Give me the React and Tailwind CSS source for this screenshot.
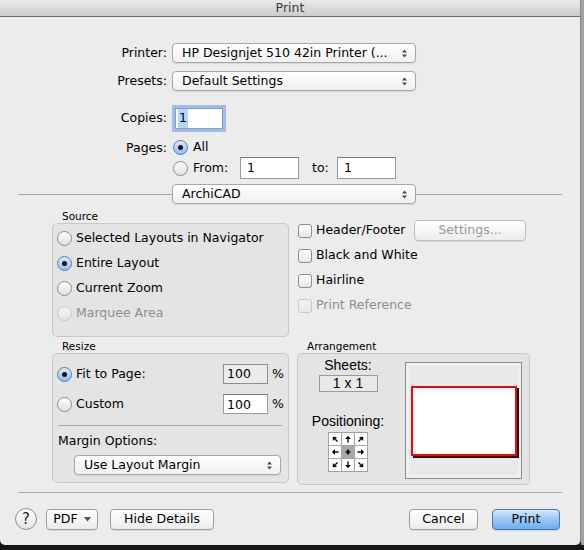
import React from "react";

// small up/down chevrons used by the pop-up buttons
function Arrows() {
  return (
    <svg width="5" height="9" viewBox="0 0 5 9" className="shrink-0">
      <path d="M0 3.5 L2.5 0.5 L5 3.5 Z" fill="#4a4a4a" />
      <path d="M0 5.5 L2.5 8.5 L5 5.5 Z" fill="#4a4a4a" />
    </svg>
  );
}

function PopUp({ value, className = "" }) {
  return (
    <div
      className={`flex h-[20px] shrink-0 items-center justify-between rounded-[4px] border border-[#a6a6a6] bg-gradient-to-b from-white to-[#f0f0f0] pl-[9px] pr-[8px] shadow-[0_1px_1px_rgba(0,0,0,0.08)] ${className}`}
    >
      <span className="truncate">{value}</span>
      <Arrows />
    </div>
  );
}

function Radio({ checked = false, disabled = false }) {
  const look = checked
    ? "border-[#5b7cab] bg-gradient-to-b from-[#dbeafb] to-[#8fbdef]"
    : disabled
    ? "border-[#c6c6c6] bg-gradient-to-b from-[#f3f3f3] to-[#e6e6e6]"
    : "border-[#8d8d8d] bg-gradient-to-b from-white to-[#e0e0e0]";
  return (
    <span
      className={`flex h-[15px] w-[15px] shrink-0 items-center justify-center rounded-full border ${look}`}
    >
      {checked && <span className="h-[5px] w-[5px] rounded-full bg-[#151515]" />}
    </span>
  );
}

function Checkbox({ disabled = false }) {
  return (
    <span
      className={`h-[14px] w-[14px] shrink-0 rounded-[3px] border bg-gradient-to-b ${
        disabled
          ? "border-[#c8c8c8] from-[#f3f3f3] to-[#e8e8e8]"
          : "border-[#8d8d8d] from-white to-[#e6e6e6]"
      }`}
    />
  );
}

function Arrow({ rot }) {
  return (
    <svg width="8" height="8" viewBox="0 0 8 8" className={rot}>
      <path d="M4 0.8 L7 4 H4.7 V7.6 H3.3 V4 H1 Z" fill="#111" />
    </svg>
  );
}

const btn =
  "flex h-[21px] items-center justify-center rounded-[4px] border border-[#9d9d9d] bg-gradient-to-b from-white to-[#ececec] shadow-[0_1px_0_rgba(0,0,0,0.08)]";

const box = "rounded-[5px] border border-[#c8c8c8] bg-[#e4e4e4]";

const small = "pl-[10px] text-[10.5px]";

export default function App() {
  const cells = [
    "-rotate-45",
    "rotate-0",
    "rotate-45",
    "-rotate-90",
    null,
    "rotate-90",
    "rotate-[-135deg]",
    "rotate-180",
    "rotate-[135deg]",
  ];

  return (
    <div className="flex h-[550px] w-[584px] flex-col overflow-hidden bg-[#161616] font-['DejaVu_Sans',sans-serif] text-[12.5px] text-black">
      <div className="flex h-[545px] shrink-0">
        {/* Window */}
        <div className="flex w-[581px] flex-col overflow-hidden rounded-b-[5px] border-r border-[#8a8a8a] bg-[#ececec]">
          {/* Title bar */}
          <div className="flex h-[17px] shrink-0 items-center justify-center border-b border-[#6e6e6e] bg-gradient-to-b from-[#ebebeb] to-[#cbcbcb] text-[#3a3a3a]">
            Print
          </div>

          {/* Printer / Presets */}
          <div className="mt-[26px] flex items-center">
            <div className="w-[167px] text-right">Printer:</div>
            <PopUp value="HP Designjet 510 42in Printer (..." className="ml-[5px] w-[244px]" />
          </div>
          <div className="mt-[8px] flex items-center">
            <div className="w-[167px] text-right">Presets:</div>
            <PopUp value="Default Settings" className="ml-[5px] w-[244px]" />
          </div>

          {/* Copies */}
          <div className="mt-[17px] flex items-center">
            <div className="w-[167px] text-right">Copies:</div>
            <div className="ml-[8px] flex h-[21px] w-[48px] items-center border border-[#7f9fc9] bg-white pl-[2px] shadow-[0_0_0_3px_rgba(110,160,230,0.6)]">
              <span className="bg-[#b5d5ff] px-[1px]">1</span>
            </div>
          </div>

          {/* Pages */}
          <div className="mt-[11px] flex items-start">
            <div className="h-[15px] w-[167px] text-right leading-[15px]">Pages:</div>
            <div className="ml-[6px] flex flex-col">
              <div className="flex h-[15px] items-center">
                <Radio checked />
                <span className="ml-[5px]">All</span>
              </div>
              <div className="mt-[2px] flex h-[22px] items-center">
                <Radio />
                <span className="ml-[5px] w-[47px]">From:</span>
                <div className="flex h-[22px] w-[59px] items-center border border-[#9a9a9a] border-t-[#7a7a7a] bg-white pl-[6px]">
                  1
                </div>
                <span className="ml-[13px] w-[25px]">to:</span>
                <div className="flex h-[22px] w-[59px] items-center border border-[#9a9a9a] border-t-[#7a7a7a] bg-white pl-[6px]">
                  1
                </div>
              </div>
            </div>
          </div>

          {/* ArchiCAD pane selector */}
          <div className="mt-[5px] flex items-center pl-[18px]">
            <div className="h-px w-[154px] bg-[#a5a5a5]" />
            <PopUp value="ArchiCAD" className="w-[244px]" />
            <div className="h-px w-[146px] bg-[#a5a5a5]" />
          </div>

          {/* Source + options */}
          <div className="mt-[4px] flex pl-[52px]">
            <div className="w-[237px]">
              <div className={`${small} h-[15px] pt-[2px] leading-[13px]`}>Source</div>
              <div className={`${box} h-[114px] pl-[4px] pt-[2px]`}>
                {[
                  ["Selected Layouts in Navigator", false, false],
                  ["Entire Layout", true, false],
                  ["Current Zoom", false, false],
                  ["Marquee Area", false, true],
                ].map(([label, checked, disabled]) => (
                  <div key={label} className="flex h-[25px] items-center">
                    <Radio checked={checked} disabled={disabled} />
                    <span className={`ml-[4px] ${disabled ? "text-[#8f8f8f]" : ""}`}>{label}</span>
                  </div>
                ))}
              </div>
            </div>

            <div className="ml-[8px] flex flex-col pt-[10px]">
              <div className="flex h-[25px] items-center pl-[1px]">
                <Checkbox />
                <span className="ml-[4px] w-[98px]">Header/Footer</span>
                <div className={`${btn} h-[20px] w-[112px] border-[#bdbdbd] text-[#9a9a9a]`}>Settings...</div>
              </div>
              <div className="flex h-[25px] items-center pl-[1px]">
                <Checkbox />
                <span className="ml-[4px]">Black and White</span>
              </div>
              <div className="flex h-[25px] items-center pl-[1px]">
                <Checkbox />
                <span className="ml-[4px]">Hairline</span>
              </div>
              <div className="flex h-[25px] items-center pl-[1px]">
                <Checkbox disabled />
                <span className="ml-[4px] text-[#8f8f8f]">Print Reference</span>
              </div>
            </div>
          </div>

          {/* Resize + Arrangement */}
          <div className="mt-[2px] flex pl-[52px]">
            <div className="w-[237px]">
              <div className={`${small} h-[14px] pt-[1px] leading-[13px]`}>Resize</div>
              <div className={`${box} h-[130px] pl-[4px] pt-[10px]`}>
                <div className="flex h-[20px] items-center">
                  <Radio checked />
                  <span className="ml-[4px] w-[147px]">Fit to Page:</span>
                  <div className="flex h-[20px] w-[45px] items-center border border-[#8e8e8e] bg-[#ebebeb] pl-[3px]">100</div>
                  <span className="ml-[4px]">%</span>
                </div>
                <div className="mt-[10px] flex h-[20px] items-center">
                  <Radio />
                  <span className="ml-[4px] w-[147px]">Custom</span>
                  <div className="flex h-[20px] w-[45px] items-center border border-[#9a9a9a] border-t-[#7a7a7a] bg-white pl-[3px] pt-[2px]">100</div>
                  <span className="ml-[4px]">%</span>
                </div>
                <div className="ml-[1px] mt-[11px] h-px w-[224px] bg-[#a8a8a8]" />
                <div className="mt-[7px] h-[15px] pl-[1px] leading-[15px]">Margin Options:</div>
                <PopUp value="Use Layout Margin" className="ml-[17px] mt-[7px] w-[207px]" />
              </div>
            </div>

            <div className="ml-[8px] w-[233px]">
              <div className={`${small} h-[14px] pt-[1px] leading-[13px]`}>Arrangement</div>
              <div className={`${box} flex h-[132px]`}>
                <div className="flex w-[100px] flex-col items-center pt-[4px] font-['Liberation_Sans',sans-serif]">
                  <div className="text-[14px] leading-[15px]">Sheets:</div>
                  <div className="mt-[2px] flex h-[17px] w-[59px] items-center justify-center border border-[#9a9a9a] bg-[#e9e9e9] text-[14px]">
                    1 x 1
                  </div>
                  <div className="mt-[22px] text-[14px] leading-[15px]">Positioning:</div>
                  <div className="mt-[3px] grid grid-cols-[12px_12px_12px] gap-px bg-[#a3a3a3] p-px">
                    {cells.map((rot, i) => (
                      <div
                        key={i}
                        className={`flex h-[12px] w-[12px] items-center justify-center ${
                          rot ? "bg-white" : "bg-[#a9a9a9]"
                        }`}
                      >
                        {rot ? (
                          <Arrow rot={rot} />
                        ) : (
                          <svg width="8" height="8" viewBox="0 0 8 8">
                            <path d="M4 0.8 L6 4 L4 7.2 L2 4 Z M0.8 4 L4 2.6 L7.2 4 L4 5.4 Z" fill="#111" />
                          </svg>
                        )}
                      </div>
                    ))}
                  </div>
                </div>
                <div className="ml-[7px] mt-[8px] flex h-[117px] w-[117px] border border-[#8b8b8b] bg-[#f0f0f0] p-[3px]">
                  <div className="flex flex-1 items-center justify-center bg-[#e9e9e9]">
                    <div className="h-[70px] w-[106px] border-2 border-[#ff0000] bg-white shadow-[2px_2px_0_#111]" />
                  </div>
                </div>
              </div>
            </div>
          </div>

          {/* Footer */}
          <div className="mx-[18px] mt-[7px] h-px bg-[#a5a5a5]" />
          <div className="mt-[15px] flex items-center pl-[15px] pr-[20px]">
            <div className="flex h-[22px] w-[22px] items-center justify-center rounded-full border border-[#8d8d8d] bg-gradient-to-b from-white to-[#e6e6e6] text-[15px] text-[#222]">
              ?
            </div>
            <div className={`${btn} ml-[9px] w-[52px] gap-[6px]`}>
              <span>PDF</span>
              <svg width="7" height="5" viewBox="0 0 7 5">
                <path d="M0 0 H7 L3.5 4.5 Z" fill="#555" />
              </svg>
            </div>
            <div className={`${btn} ml-[12px] w-[104px]`}>Hide Details</div>
            <div className={`${btn} ml-auto w-[69px]`}>Cancel</div>
            <div className="ml-[14px] flex h-[21px] w-[68px] items-center justify-center rounded-[4px] border border-[#4f76b4] bg-gradient-to-b from-[#d4e8fc] via-[#99c6f4] to-[#6caef0] shadow-[0_1px_0_rgba(0,0,0,0.1)]">
              Print
            </div>
          </div>
        </div>
        <div className="w-[3px] bg-[#a2a2a2]" />
      </div>
    </div>
  );
}
